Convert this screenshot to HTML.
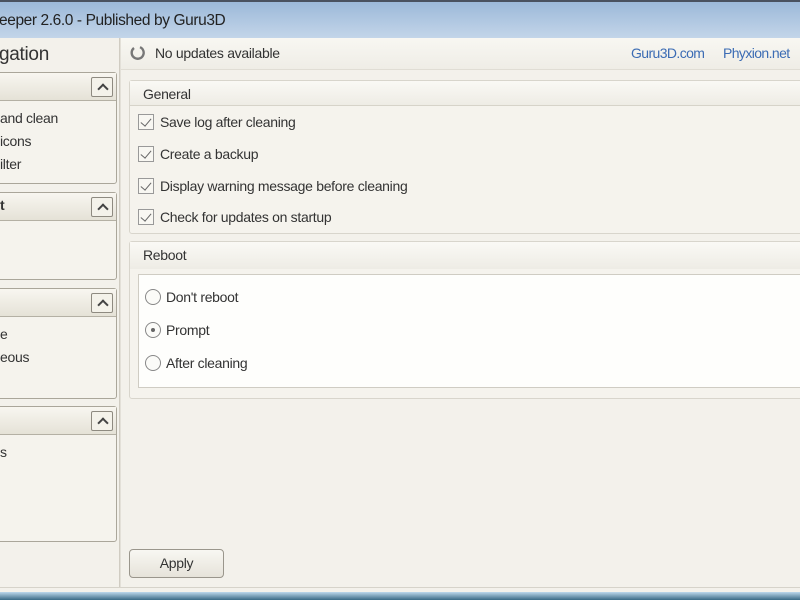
<!DOCTYPE html>
<html><head><style>
*{margin:0;padding:0;box-sizing:border-box}
body{width:800px;height:600px;overflow:hidden;background:#f3f1eb;font-family:"Liberation Sans","DejaVu Sans",sans-serif;color:#333;position:relative;font-size:14px;letter-spacing:-.3px}
.a{position:absolute}
.title{left:0;top:0;width:800px;height:38px;background:linear-gradient(#9cb9d9,#c3d5e9);border-top:2px solid #4a5260;}
.title span{position:absolute;left:-1px;top:10px;font-size:15.5px;color:#222;letter-spacing:-.4px}
.grp{border:1px solid #aaa69a;border-radius:3px;background:#f5f3ed;left:-4px;width:121px}
.grp .h{height:28px;background:linear-gradient(#f8f6f0,#e5e2d7);border-bottom:1px solid #b4b0a4}
.up{position:absolute;right:3px;top:4px;width:22px;height:20px;border:1px solid #8e8a80;border-radius:2px;background:#f4f2ea}
.up:after{content:"";position:absolute;left:7px;top:7px;width:6px;height:6px;border:solid #444;border-width:2px 0 0 2px;transform:rotate(45deg)}
.it{left:0;font-size:14px;color:#333}
.chk{width:16px;height:16px;border:1px solid #999;background:#f8f7f2;left:138px}
.chk:after{content:"";position:absolute;left:4px;top:1px;width:5px;height:9px;border:solid #666;border-width:0 1.5px 1.5px 0;transform:rotate(40deg)}
.lbl{left:160px;font-size:14px}
.rad{width:16px;height:16px;border:1px solid #888;border-radius:50%;background:#fbfbf8;left:145px}
</style></head><body>
<div class="a title"><span>eeper 2.6.0 - Published by Guru3D</span></div>
<div class="a" style="left:119px;top:38px;width:2px;height:550px;background:#e3e0d8;border-left:1px solid #d0ccc2"></div>
<div class="a" style="left:-1px;top:44px;font-size:19px;color:#333">gation</div>

<div class="a grp" style="top:72px;height:112px"><div class="h"></div><div class="up"></div></div>
<div class="a it" style="top:110px">and clean</div>
<div class="a it" style="top:133px">icons</div>
<div class="a it" style="top:156px">ilter</div>

<div class="a grp" style="top:192px;height:88px"><div class="h"></div><div class="up"></div></div>
<div class="a it" style="top:197px;font-weight:bold">t</div>

<div class="a grp" style="top:288px;height:111px"><div class="h"></div><div class="up"></div></div>
<div class="a it" style="top:326px">e</div>
<div class="a it" style="top:349px">eous</div>

<div class="a grp" style="top:406px;height:136px"><div class="h"></div><div class="up"></div></div>
<div class="a it" style="top:444px">s</div>

<div class="a" style="left:121px;top:38px;width:679px;height:32px;background:linear-gradient(#f8f7f2,#efede6);border-bottom:1px solid #e0ddd4"></div>
<svg class="a" style="left:129px;top:44px" width="18" height="18" viewBox="0 0 18 18"><path d="M11 3.2A6 6 0 1 1 5 4" fill="none" stroke="#777" stroke-width="2.4"/></svg>
<div class="a" style="left:155px;top:45px;font-size:14px">No updates available</div>
<div class="a" style="left:631px;top:45px;font-size:14px;color:#3c6cb4;letter-spacing:-.6px">Guru3D.com</div>
<div class="a" style="left:723px;top:45px;font-size:14px;color:#3c6cb4;letter-spacing:-.6px">Phyxion.net</div>

<div class="a" style="left:129px;top:80px;width:680px;height:154px;border:1px solid #d8d5cc;border-radius:3px;background:#f5f3ed"></div>
<div class="a" style="left:130px;top:81px;width:680px;height:25px;background:linear-gradient(#faf9f5,#eeece5);border-bottom:1px solid #d6d3c9"></div>
<div class="a" style="left:143px;top:86px">General</div>
<div class="a chk" style="top:114px"></div><div class="a lbl" style="top:114px">Save log after cleaning</div>
<div class="a chk" style="top:146px"></div><div class="a lbl" style="top:146px">Create a backup</div>
<div class="a chk" style="top:178px"></div><div class="a lbl" style="top:178px">Display warning message before cleaning</div>
<div class="a chk" style="top:209px"></div><div class="a lbl" style="top:209px">Check for updates on startup</div>

<div class="a" style="left:129px;top:241px;width:680px;height:158px;border:1px solid #d8d5cc;border-radius:3px;background:#f5f3ed"></div>
<div class="a" style="left:130px;top:242px;width:680px;height:27px;background:linear-gradient(#faf9f5,#eeece5)"></div>
<div class="a" style="left:143px;top:247px">Reboot</div>
<div class="a" style="left:138px;top:274px;width:670px;height:114px;background:#fefefc;border:1px solid #cfccc3"></div>
<div class="a rad" style="top:289px"></div><div class="a lbl" style="left:166px;top:289px">Don't reboot</div>
<div class="a rad" style="top:322px"><div style="position:absolute;left:5px;top:5px;width:4px;height:4px;border-radius:50%;background:#666"></div></div><div class="a lbl" style="left:166px;top:322px">Prompt</div>
<div class="a rad" style="top:355px"></div><div class="a lbl" style="left:166px;top:355px">After cleaning</div>

<div class="a" style="left:129px;top:549px;width:95px;height:29px;border:1px solid #9a968c;border-radius:4px;background:linear-gradient(#f8f7f2,#e6e3da);text-align:center;line-height:27px">Apply</div>

<div class="a" style="left:0;top:587px;width:800px;height:1px;background:#d6d3ca"></div>
<div class="a" style="left:0;top:592px;width:800px;height:8px;background:linear-gradient(#bcd8ec,#3a6a86)"></div>
</body></html>
